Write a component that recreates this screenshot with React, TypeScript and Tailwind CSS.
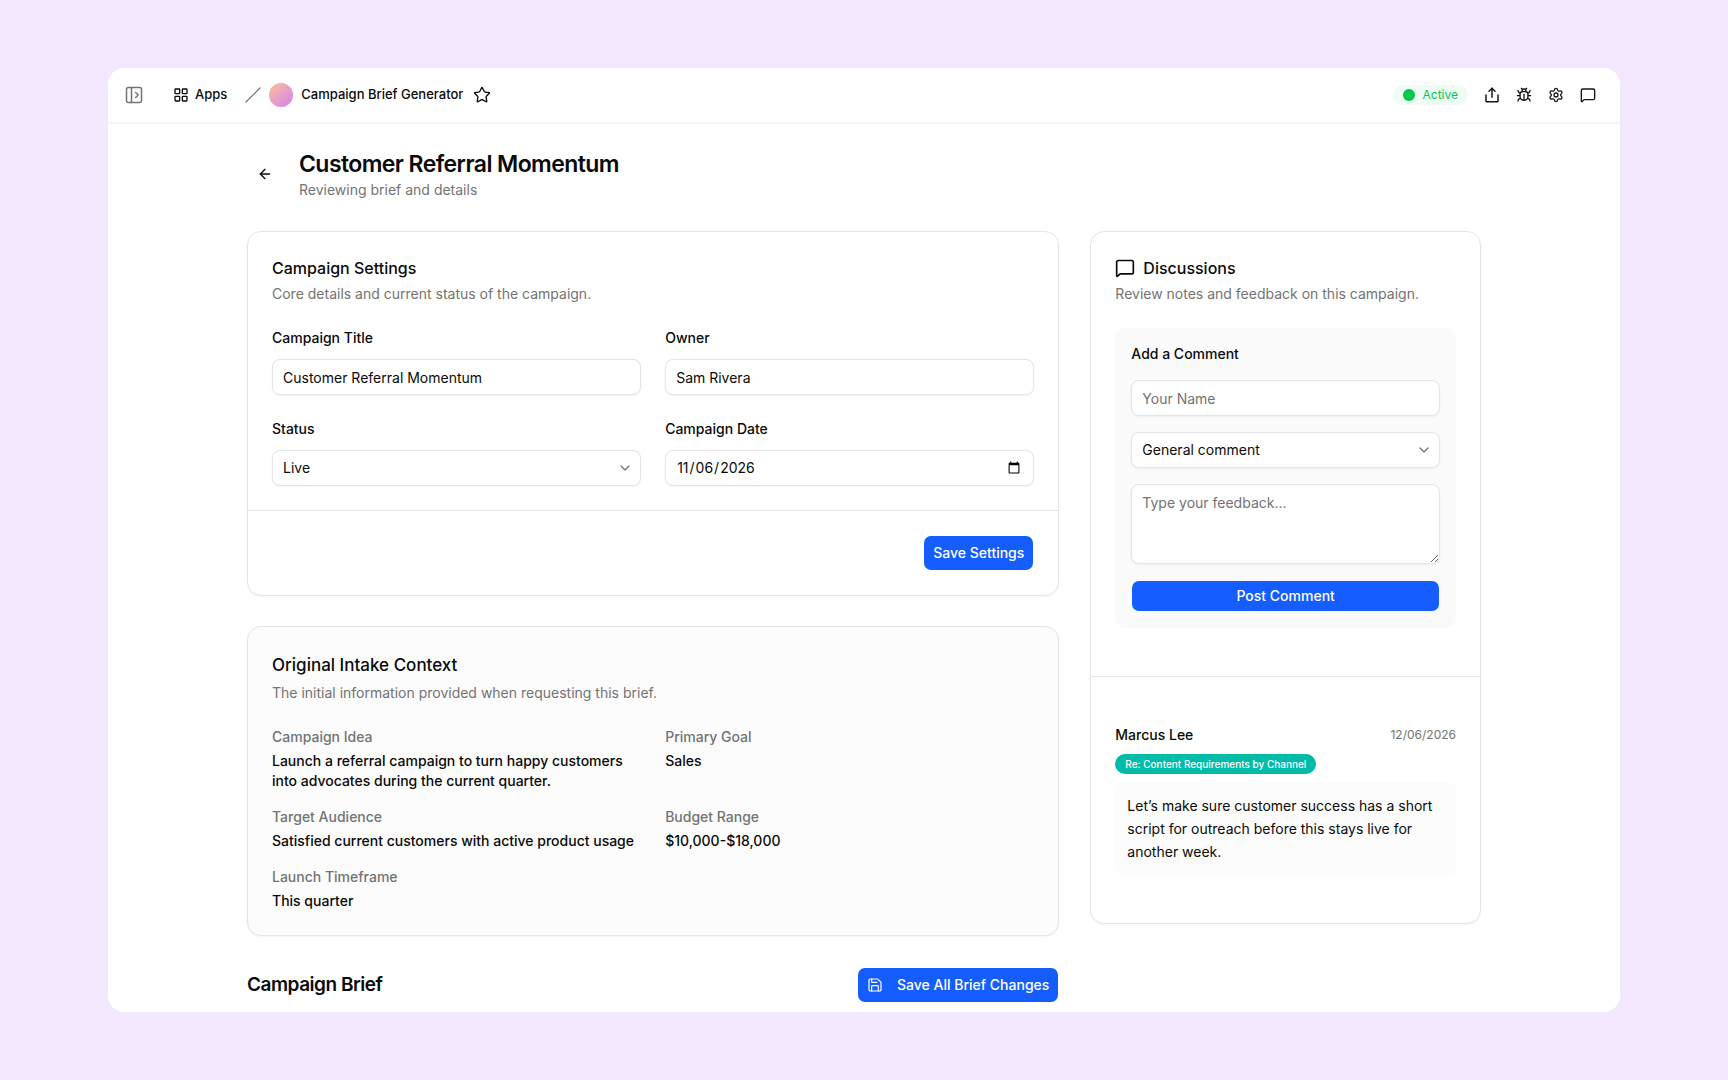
import { useState } from "react"
import type { ReactNode } from "react"
import { ArrowLeft, Bug, ChevronDown, LayoutGrid, MessageSquare, PanelLeftOpen, Save, Settings, Star } from "lucide-react"

const intake = [
  { label: "Campaign Idea", value: "Launch a referral campaign to turn happy customers into advocates during the current quarter." },
  { label: "Primary Goal", value: "Sales" },
  { label: "Target Audience", value: "Satisfied current customers with active product usage" },
  { label: "Budget Range", value: "$10,000-$18,000" },
  { label: "Launch Timeframe", value: "This quarter" },
]

const comments = [
  {
    name: "Marcus Lee",
    date: "12/06/2026",
    topic: "Re: Content Requirements by Channel",
    text: "Let’s make sure customer success has a short script for outreach before this stays live for another week.",
  },
]

const control = "h-9 w-full rounded-lg border border-neutral-200 bg-white px-[10px] text-sm text-neutral-950 shadow-xs placeholder:text-neutral-500"
const primary = "rounded-lg border border-transparent bg-[#155dfc] bg-clip-padding text-sm font-medium text-white"

function ShareIcon() {
  return (
    <svg width="18" height="18" viewBox="0 0 24 24" fill="none" stroke="currentColor" strokeWidth="2" strokeLinecap="round" strokeLinejoin="round">
      <path d="M12 3v12" />
      <path d="m8 7 4-4 4 4" />
      <path d="M4 12v8a1 1 0 0 0 1 1h14a1 1 0 0 0 1-1v-8" />
    </svg>
  )
}

function IconButton({ label, children }: { label: string; children: ReactNode }) {
  return (
    <button aria-label={label} className="flex size-8 items-center justify-center">
      {children}
    </button>
  )
}

function Card({ className = "", children }: { className?: string; children: ReactNode }) {
  return <section className={`rounded-[14px] border border-neutral-200 shadow-xs ${className}`}>{children}</section>
}

function Field({ id, label, children }: { id: string; label: string; children: ReactNode }) {
  return (
    <div className="flex flex-col gap-[11px]">
      <label htmlFor={id} className="text-sm leading-5 font-medium">
        {label}
      </label>
      {children}
    </div>
  )
}

function Select({ id, label, options }: { id: string; label?: string; options: string[] }) {
  return (
    <div className="relative">
      <select id={id} aria-label={label} className={`${control} appearance-none`}>
        {options.map((option) => (
          <option key={option}>{option}</option>
        ))}
      </select>
      <ChevronDown size={16} className="pointer-events-none absolute top-[10px] right-2 text-neutral-500" />
    </div>
  )
}

function TopBar() {
  return (
    <header className="flex h-14 items-center justify-between border-b-2 border-neutral-100 px-4">
      <nav className="flex items-center text-[13px] font-medium">
        <button aria-label="Open sidebar" className="mr-[29px] text-neutral-500">
          <PanelLeftOpen size={20} strokeWidth={1.8} />
        </button>
        <a href="#apps" className="flex items-center gap-[6px]">
          <LayoutGrid size={16} />
          Apps
        </a>
        <svg width="16" height="16" viewBox="0 0 16 16" className="mr-2 ml-[18px] text-neutral-500" stroke="currentColor" strokeWidth="1.2" strokeLinecap="round">
          <path d="M1 15 15 1" />
        </svg>
        <span className="mr-2 size-6 rounded-full bg-linear-to-br from-[#fbbf8f] to-[#d67cf0]" />
        Campaign Brief Generator
        <button aria-label="Add to favorites" className="ml-[10px]">
          <Star size={18} strokeWidth={1.8} />
        </button>
      </nav>
      <div className="flex items-center text-neutral-900">
        <span className="mr-2 flex h-5 items-center gap-2 rounded-full bg-[#effbf3] px-[10px] text-xs text-[#00c950]">
          <span className="size-3 rounded-full bg-[#00c950]" />
          Active
        </span>
        <IconButton label="Share">
          <ShareIcon />
        </IconButton>
        <IconButton label="Report a bug">
          <Bug size={16} />
        </IconButton>
        <IconButton label="Settings">
          <Settings size={16} />
        </IconButton>
        <IconButton label="Comments">
          <MessageSquare size={16} />
        </IconButton>
      </div>
    </header>
  )
}

function CampaignSettings() {
  const [title, setTitle] = useState("Customer Referral Momentum")
  const [owner, setOwner] = useState("Sam Rivera")
  const [date, setDate] = useState("2026-11-06")

  return (
    <Card>
      <div className="p-6">
        <h2 className="leading-6 font-medium">Campaign Settings</h2>
        <p className="mt-1 text-sm leading-5 text-neutral-500">Core details and current status of the campaign.</p>
        <div className="mt-6 grid grid-cols-2 gap-x-6 gap-y-6">
          <Field id="title" label="Campaign Title">
            <input id="title" className={control} value={title} onChange={(e) => setTitle(e.target.value)} />
          </Field>
          <Field id="owner" label="Owner">
            <input id="owner" className={control} value={owner} onChange={(e) => setOwner(e.target.value)} />
          </Field>
          <Field id="status" label="Status">
            <Select id="status" options={["Live", "Draft", "In Review"]} />
          </Field>
          <Field id="date" label="Campaign Date">
            <input id="date" type="date" className={control} value={date} onChange={(e) => setDate(e.target.value)} />
          </Field>
        </div>
      </div>
      <div className="flex justify-end border-t border-neutral-200 p-6">
        <button className={`${primary} h-9 px-[9px]`}>Save Settings</button>
      </div>
    </Card>
  )
}

function IntakeContext() {
  return (
    <Card className="bg-[#fcfcfc] p-6">
      <h2 className="text-[17px] leading-7 font-medium">Original Intake Context</h2>
      <p className="mt-1 text-sm leading-5 text-neutral-500">The initial information provided when requesting this brief.</p>
      <dl className="mt-6 grid grid-cols-2 gap-x-6 gap-y-4 text-sm leading-5 font-medium">
        {intake.map((item) => (
          <div key={item.label}>
            <dt className="text-neutral-500">{item.label}</dt>
            <dd className="mt-1">{item.value}</dd>
          </div>
        ))}
      </dl>
    </Card>
  )
}

function Discussions() {
  return (
    <Card>
      <div className="px-6 pt-6 pb-12">
        <h2 className="flex items-center gap-2 leading-6 font-medium">
          <MessageSquare size={20} />
          Discussions
        </h2>
        <p className="mt-1 text-sm leading-5 text-neutral-500">Review notes and feedback on this campaign.</p>
        <form className="mt-6 flex flex-col gap-4 rounded-[10px] bg-neutral-50 p-4" onSubmit={(e) => e.preventDefault()}>
          <h3 className="text-sm leading-5 font-medium">Add a Comment</h3>
          <input aria-label="Your Name" placeholder="Your Name" className={control} />
          <Select id="topic" label="Comment topic" options={["General comment", "Content Requirements by Channel"]} />
          <textarea
            aria-label="Feedback"
            placeholder="Type your feedback..."
            className="block h-20 w-full rounded-lg border border-neutral-200 bg-white px-[10px] py-2 text-sm shadow-xs placeholder:text-neutral-500"
          />
          <button className={`${primary} h-8`}>Post Comment</button>
        </form>
      </div>
      <div className="border-t border-neutral-200 px-6 py-12">
        {comments.map((comment) => (
          <article key={comment.name}>
            <div className="flex items-center justify-between">
              <h3 className="text-sm leading-5 font-medium">{comment.name}</h3>
              <time className="text-xs text-neutral-500">{comment.date}</time>
            </div>
            <span className="mt-[9px] flex h-5 w-fit items-center rounded-full bg-[#00bba7] px-[10px] text-[10px] font-medium text-white">
              {comment.topic}
            </span>
            <p className="mt-2 rounded-lg bg-[#fcfcfc] p-3 text-sm leading-[23px]">{comment.text}</p>
          </article>
        ))}
      </div>
    </Card>
  )
}

export default function App() {
  return (
    <div className="flex min-h-screen flex-col bg-[#f3e8ff] px-[108px] py-[68px] font-['Inter','Liberation_Sans',sans-serif] text-neutral-950">
      <div className="flex-1 rounded-2xl bg-white">
        <TopBar />
        <main className="mx-auto max-w-[1234px] pt-6">
          <div className="flex items-center gap-4">
            <button aria-label="Back" className="flex size-9 items-center justify-center">
              <ArrowLeft size={16} />
            </button>
            <div>
              <h1 className="text-[23px] leading-8 font-semibold tracking-tight">Customer Referral Momentum</h1>
              <p className="text-sm leading-5 text-neutral-500">Reviewing brief and details</p>
            </div>
          </div>
          <div className="mt-[31px] grid grid-cols-3 items-start gap-[31px]">
            <div className="col-span-2 flex flex-col gap-[30px]">
              <CampaignSettings />
              <IntakeContext />
              <div className="flex h-[38px] items-center justify-between">
                <h2 className="text-[19px] font-semibold tracking-tight">Campaign Brief</h2>
                <button className={`${primary} flex h-9 items-center gap-[14px] px-[9px]`}>
                  <Save size={16} strokeWidth={1.8} />
                  Save All Brief Changes
                </button>
              </div>
            </div>
            <Discussions />
          </div>
        </main>
      </div>
    </div>
  )
}
